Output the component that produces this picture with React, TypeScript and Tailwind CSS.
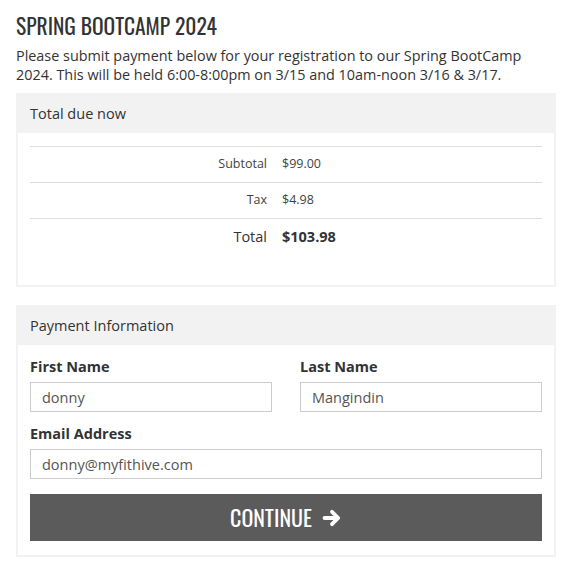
import React from 'react';

const condensed = "font-['Oswald','Liberation_Sans_Narrow','DejaVu_Sans_Condensed','Roboto_Condensed',sans-serif]";

function Panel({ title, children }: { title: string; children: React.ReactNode }) {
  return (
    <section className="border-2 border-[#f2f2f2] bg-white">
      <div className="flex h-[38px] items-center bg-[#f2f2f2] px-[12px] text-[14.5px] text-[#333]">{title}</div>
      {children}
    </section>
  );
}

function Field({ label, value }: { label: string; value: string }) {
  return (
    <label className="block">
      <span className="block text-[14.5px] font-bold leading-[20px] text-[#333]">{label}</span>
      <input
        readOnly
        value={value}
        className="mt-[5px] block h-[30px] w-full border border-[#ccc] bg-white px-[11px] text-[14.5px] text-[#555] outline-none"
      />
    </label>
  );
}

function ArrowIcon() {
  return (
    <svg viewBox="0 0 20 20" className="h-[20px] w-[20px]" fill="none" stroke="currentColor" strokeWidth={3.8} strokeLinecap="round" strokeLinejoin="round" aria-hidden="true">
      <path d="M2.5 10h13" />
      <path d="M10 3.8l6.2 6.2-6.2 6.2" />
    </svg>
  );
}

const lines = [
  { label: 'Subtotal', value: '$99.00' },
  { label: 'Tax', value: '$4.98' },
];

export default function App() {
  return (
    <div className="min-h-screen bg-white pb-[12px] pl-[16px] pr-[15px] pt-[9px] font-['Open_Sans','Noto_Sans',sans-serif] text-[#333]">
      <h1 className={`${condensed} text-[21.5px] leading-[32px] text-[#333] uppercase`}>Spring BootCamp 2024</h1>
      <p className="mt-[5px] text-[14.4px] leading-[19px]">
        Please submit payment below for your registration to our Spring BootCamp 2024. This will be held 6:00-8:00pm on 3/15 and 10am-noon 3/16 &amp; 3/17.
      </p>

      <div className="mt-[9px]">
        <Panel title="Total due now">
          <div className="px-[12px] pb-[30px] pt-[13px]">
            <div className="border-t border-[#ddd]">
              {lines.map((line) => (
                <div key={line.label} className="grid h-[36px] grid-cols-[252px_1fr] items-center border-b border-[#ddd] text-[12.5px]">
                  <span className="pr-[15px] text-right text-[#444]">{line.label}</span>
                  <span className="text-[#444]">{line.value}</span>
                </div>
              ))}
              <div className="grid h-[36px] grid-cols-[252px_1fr] items-center text-[14.5px]">
                <span className="pr-[15px] text-right">Total</span>
                <span className="font-bold">$103.98</span>
              </div>
            </div>
          </div>
        </Panel>
      </div>

      <div className="mt-[18px]">
        <Panel title="Payment Information">
          <div className="px-[12px] pb-[14px] pt-[12px]">
            <div className="grid grid-cols-2 gap-x-[28px]">
              <Field label="First Name" value="donny" />
              <Field label="Last Name" value="Mangindin" />
            </div>
            <div className="mt-[12px]">
              <Field label="Email Address" value="donny@myfithive.com" />
            </div>
            <button
              type="button"
              className={`${condensed} mt-[15px] flex h-[47px] w-full items-center justify-center gap-[10px] bg-[#5b5b5b] text-[22px] text-white uppercase`}
            >
              Continue
              <ArrowIcon />
            </button>
          </div>
        </Panel>
      </div>
    </div>
  );
}
